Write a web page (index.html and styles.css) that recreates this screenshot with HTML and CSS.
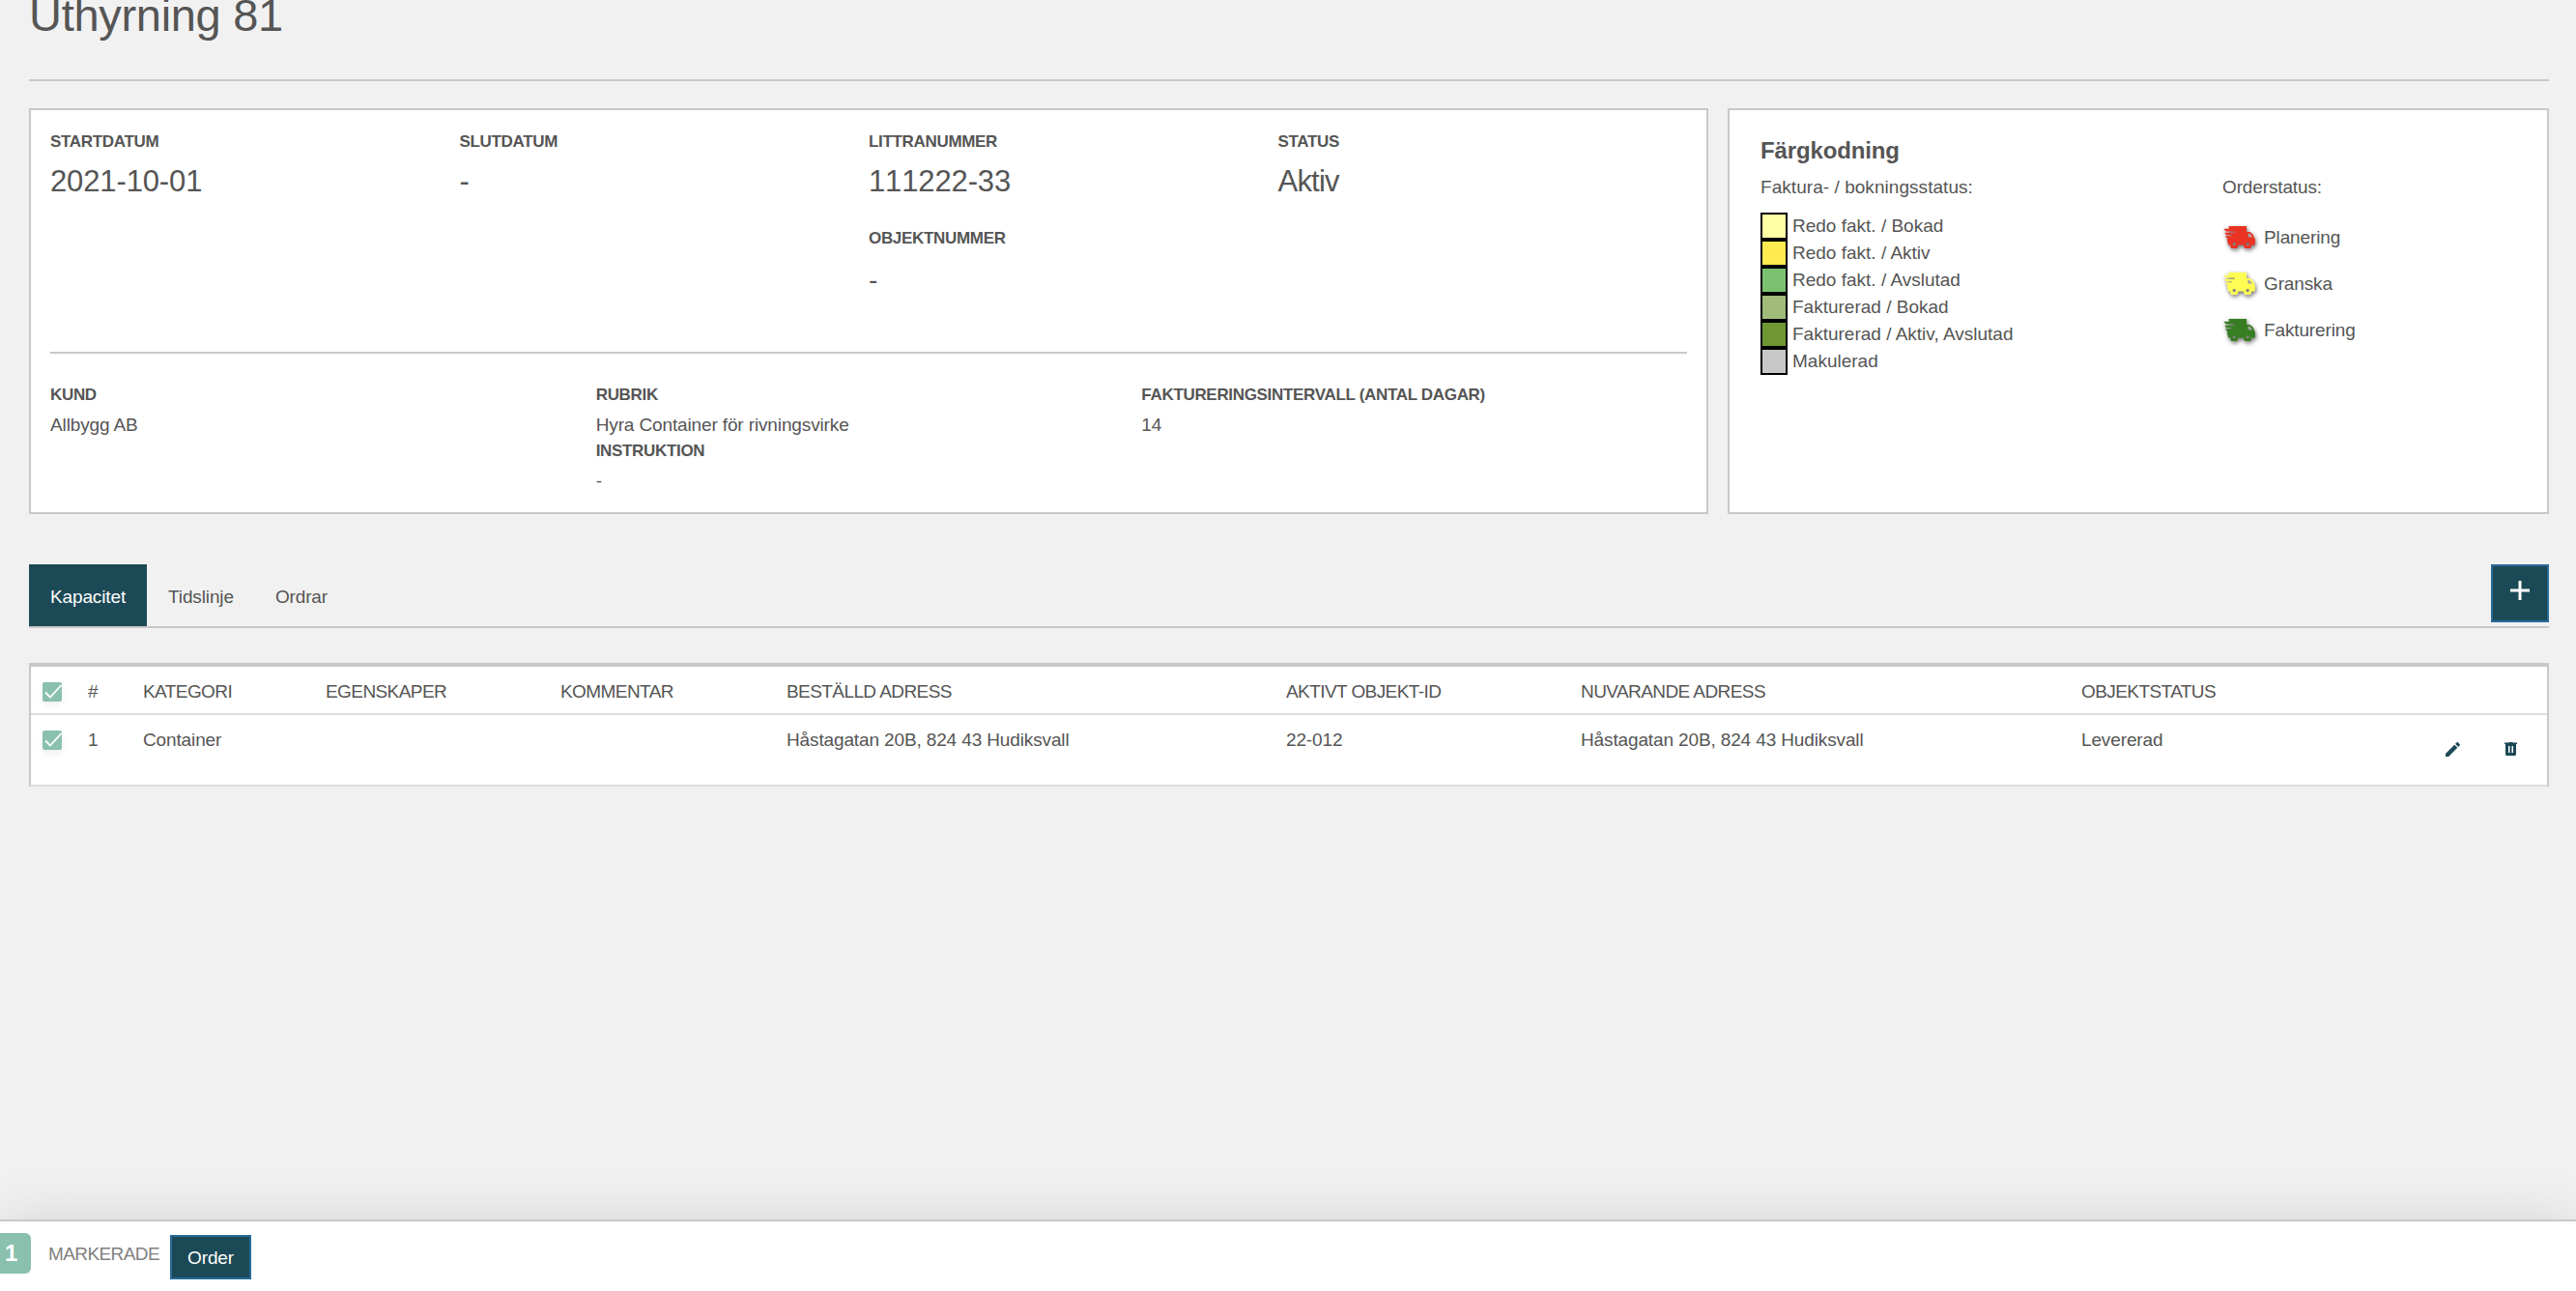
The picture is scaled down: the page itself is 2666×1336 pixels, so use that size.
FILE: index.html
```html
<!DOCTYPE html>
<html lang="sv">
  <head>
    <meta charset="utf-8">
    <title>Uthyrning 81</title>
    <link rel="stylesheet" href="styles.css">
  </head>

  <body>
    <svg width="0" height="0" class="sprite">
      <symbol id="truck" viewBox="0 0 97 68">
        <path fill-rule="evenodd" d="M16 0H71V18H79Q91 21 94 35L97 40V58H86A12 12 0 0 1 62 58H45A12 12 0 0 1 21 58H15L12 45V36H9L6 30H25V27H8L4 20H34V16H8L0 8H17ZM75 23V33L88 35Q85 26 80 24ZM33 50A5 5 0 1 0 33 60A5 5 0 1 0 33 50ZM74 50A5 5 0 1 0 74 60A5 5 0 1 0 74 50Z"/>
      </symbol>
      <symbol id="check" viewBox="0 0 20 20">
        <path d="M3 10.500L8 15.500L19.500 3" fill="none" stroke="#fff" stroke-width="1.800"/>
      </symbol>
    </svg>

    <div class="page">
      <h1 class="title">Uthyrning 81</h1>

      <div class="cards">
        <div class="card info">
          <div class="row top">
            <div class="col">
              <div class="label">Startdatum</div>
              <div class="big">2021-10-01</div>
            </div>
            <div class="col">
              <div class="label">Slutdatum</div>
              <div class="big">-</div>
            </div>
            <div class="col">
              <div class="label">Littranummer</div>
              <div class="big">111222-33</div>
              <div class="label object">Objektnummer</div>
              <div class="big dash">-</div>
            </div>
            <div class="col">
              <div class="label">Status</div>
              <div class="big state">Aktiv</div>
            </div>
          </div>
          <div class="row bottom">
            <div class="col">
              <div class="label">Kund</div>
              <div class="value">Allbygg AB</div>
            </div>
            <div class="col">
              <div class="label">Rubrik</div>
              <div class="value">Hyra Container för rivningsvirke</div>
              <div class="label instruction">Instruktion</div>
              <div class="value">-</div>
            </div>
            <div class="col">
              <div class="label">Faktureringsintervall (antal dagar)</div>
              <div class="value">14</div>
            </div>
          </div>
        </div>

        <div class="card legend">
          <h2>Färgkodning</h2>
          <div class="row">
            <div class="statuses">
              <p>Faktura- / bokningsstatus:</p>
              <div class="status"><span class="swatch ready-booked"></span>Redo fakt. / Bokad</div>
              <div class="status"><span class="swatch ready-active"></span>Redo fakt. / Aktiv</div>
              <div class="status"><span class="swatch ready-closed"></span>Redo fakt. / Avslutad</div>
              <div class="status"><span class="swatch billed-booked"></span>Fakturerad / Bokad</div>
              <div class="status"><span class="swatch billed-active"></span>Fakturerad / Aktiv, Avslutad</div>
              <div class="status"><span class="swatch cancelled"></span>Makulerad</div>
            </div>
            <div class="orders">
              <p>Orderstatus:</p>
              <div class="order"><svg class="truck red"><use href="#truck"/></svg>Planering</div>
              <div class="order"><svg class="truck yellow"><use href="#truck"/></svg>Granska</div>
              <div class="order"><svg class="truck green"><use href="#truck"/></svg>Fakturering</div>
            </div>
          </div>
        </div>
      </div>

      <div class="tabs">
        <a class="tab active">Kapacitet</a>
        <a class="tab">Tidslinje</a>
        <a class="tab">Ordrar</a>
        <button class="add">
          <svg width="20" height="20" viewBox="0 0 20 20"><path d="M10 0V20M0 10H20" stroke="#fff" stroke-width="3"/></svg>
        </button>
      </div>

      <div class="table">
        <div class="tr head">
          <div><svg class="checkbox"><use href="#check"/></svg></div>
          <div>#</div>
          <div>Kategori</div>
          <div>Egenskaper</div>
          <div>Kommentar</div>
          <div>Beställd adress</div>
          <div>Aktivt objekt-id</div>
          <div>Nuvarande adress</div>
          <div>Objektstatus</div>
        </div>
        <div class="tr item">
          <div><svg class="checkbox"><use href="#check"/></svg></div>
          <div>1</div>
          <div>Container</div>
          <div></div>
          <div></div>
          <div>Håstagatan 20B, 824 43 Hudiksvall</div>
          <div>22-012</div>
          <div>Håstagatan 20B, 824 43 Hudiksvall</div>
          <div>Levererad</div>
          <div class="actions">
            <svg width="15" height="15" viewBox="3 3 18 18"><path d="M20.710 7.040c.39-.39.39-1.040 0-1.410l-2.340-2.340c-.37-.39-1.020-.39-1.410 0l-1.840 1.830 3.750 3.750M3 17.250V21h3.750L17.810 9.930l-3.750-3.750L3 17.250z"/></svg>
            <svg width="13" height="14" viewBox="0 0 13 14"><path fill-rule="evenodd" d="M0 .5H4L5 0H8L9 .5H13V2H12V12.500Q12 14 10.500 14H2.500Q1 14 1 12.500V2H0ZM4 4V11H5.500V4ZM7.500 4V11H9V4Z"/></svg>
          </div>
        </div>
      </div>
    </div>

    <div class="footer">
      <span class="count">1</span>
      <span class="marked">Markerade</span>
      <button class="order-button">Order</button>
    </div>
  </body>
</html>
```
FILE: styles.css
```css
*, *:before, *:after {
  box-sizing: border-box;
  padding: 0;
  margin: 0;
}

body {
  height: 1336px;
  overflow: hidden;
  display: flex;
  flex-direction: column;
  background-color: #f1f1f1;
  color: #555;
  font-family: "Liberation Sans", Arial, sans-serif;
  font-size: 19px;
  line-height: 22px;
  letter-spacing: -0.13px;
}

.sprite {
  position: absolute;
}

.page {
  flex: 1;
  padding: 0 28px 0 30px;
}

.title {
  margin-top: -14px;
  padding-bottom: 36px;
  border-bottom: 2px solid #c8c8c8;
  font-size: 47px;
  font-weight: normal;
  line-height: 60px;
  letter-spacing: -0.3px;
}

.cards {
  display: flex;
  gap: 20px;
  margin-top: 28px;
}

.card {
  height: 420px;
  background-color: white;
  border: 2px solid #c8c8c8;
}

.info {
  width: 1738px;
  padding: 23px 20px;
}

.row {
  display: flex;
}

.col {
  flex: 1;
}

.top {
  height: 229px;
  border-bottom: 2px solid #c8c8c8;
}

.bottom {
  padding-top: 33px;
}

.label {
  font-size: 17px;
  font-weight: bold;
  line-height: 20px;
  letter-spacing: -0.32px;
  text-transform: uppercase;
}

.big {
  margin-top: 11px;
  font-size: 31px;
  line-height: 40px;
  font-kerning: none;
}

.state {
  letter-spacing: -0.8px;
}

.object {
  margin-top: 29px;
}

.dash {
  margin-top: 13px;
  font-size: 28px;
}

.value {
  margin-top: 10px;
}

.instruction {
  margin-top: 6px;
}

.legend {
  width: 850px;
  padding: 26px 32px;
}

.legend h2 {
  font-size: 24px;
  line-height: 32px;
}

.legend p {
  margin-top: 11px;
}

.statuses {
  width: 478px;
  letter-spacing: 0;
}

.status {
  display: flex;
  align-items: center;
  gap: 5px;
  height: 28px;
}

.statuses p {
  margin-bottom: 15px;
  letter-spacing: 0.05px;
}

.swatch {
  width: 28px;
  height: 28px;
  border: 2px solid black;
}

.ready-booked { background-color: #ffffa5; }
.ready-active { background-color: #ffeb50; }
.ready-closed { background-color: #7bc270; }
.billed-booked { background-color: #a0bb7a; }
.billed-active { background-color: #6f9835; }
.cancelled { background-color: #c8c8c8; }

.orders p {
  margin-bottom: 17px;
}

.order {
  display: flex;
  align-items: center;
  gap: 9px;
  height: 48px;
}

.truck {
  width: 33px;
  height: 23px;
  margin: -2px 0 0 1px;
  overflow: visible;
  filter: drop-shadow(1px 2px 2px rgba(0, 0, 0, 0.6));
}

.red { fill: #ea3323; }
.yellow { fill: #fffd54; }
.green { fill: #377e22; }

.tabs {
  display: flex;
  height: 66px;
  margin-top: 52px;
  border-bottom: 2px solid #c8c8c8;
}

.tab {
  height: 64px;
  padding: 0 21px 0 22px;
  line-height: 67px;
}

.active {
  padding-right: 22px;
  background-color: #1c4956;
  color: white;
}

button {
  border: 2px solid #286a9b;
  background-color: #1c4956;
  color: white;
  font: inherit;
  letter-spacing: inherit;
}

.add {
  width: 60px;
  height: 60px;
  margin-left: auto;
}

.add svg {
  display: block;
  margin: -6px auto 0;
}

.table {
  margin-top: 36px;
  background-color: white;
  border: 2px solid #c8c8c8;
  border-top-width: 4px;
  border-bottom: none;
}

.tr {
  display: grid;
  grid-template-columns: 47px 57px 189px 243px 234px 517px 305px 518px 374px auto;
  padding: 15px 0 0 12px;
  border-bottom: 2px solid #ddd;
}

.head {
  height: 50px;
  letter-spacing: -0.58px;
  text-transform: uppercase;
}

.item {
  height: 74px;
}

.checkbox {
  display: block;
  width: 20px;
  height: 20px;
  margin-top: 1px;
  border-radius: 2px;
  background-color: #8ac0ae;
  box-shadow: 0 4px 6px rgba(0, 0, 0, 0.06);
}

.actions {
  display: flex;
  gap: 46px;
  padding: 13px 0 0 3px;
  fill: #1c4956;
}

.footer {
  display: flex;
  height: 74px;
  background-color: white;
  border-top: 2px solid #c8c8c8;
  box-shadow: 0 0 60px rgba(0, 0, 0, 0.12);
}

.count {
  width: 32px;
  height: 42px;
  margin-top: 12px;
  padding-left: 5px;
  border-radius: 0 6px 6px 0;
  background-color: #8ac0ae;
  color: white;
  font-size: 24px;
  font-weight: bold;
  line-height: 42px;
}

.marked {
  width: 126px;
  margin: 23px 0 0 18px;
  color: #808080;
  letter-spacing: -0.6px;
  text-transform: uppercase;
}

.order-button {
  width: 84px;
  height: 46px;
  margin-top: 14px;
  padding-top: 1px;
}
```
